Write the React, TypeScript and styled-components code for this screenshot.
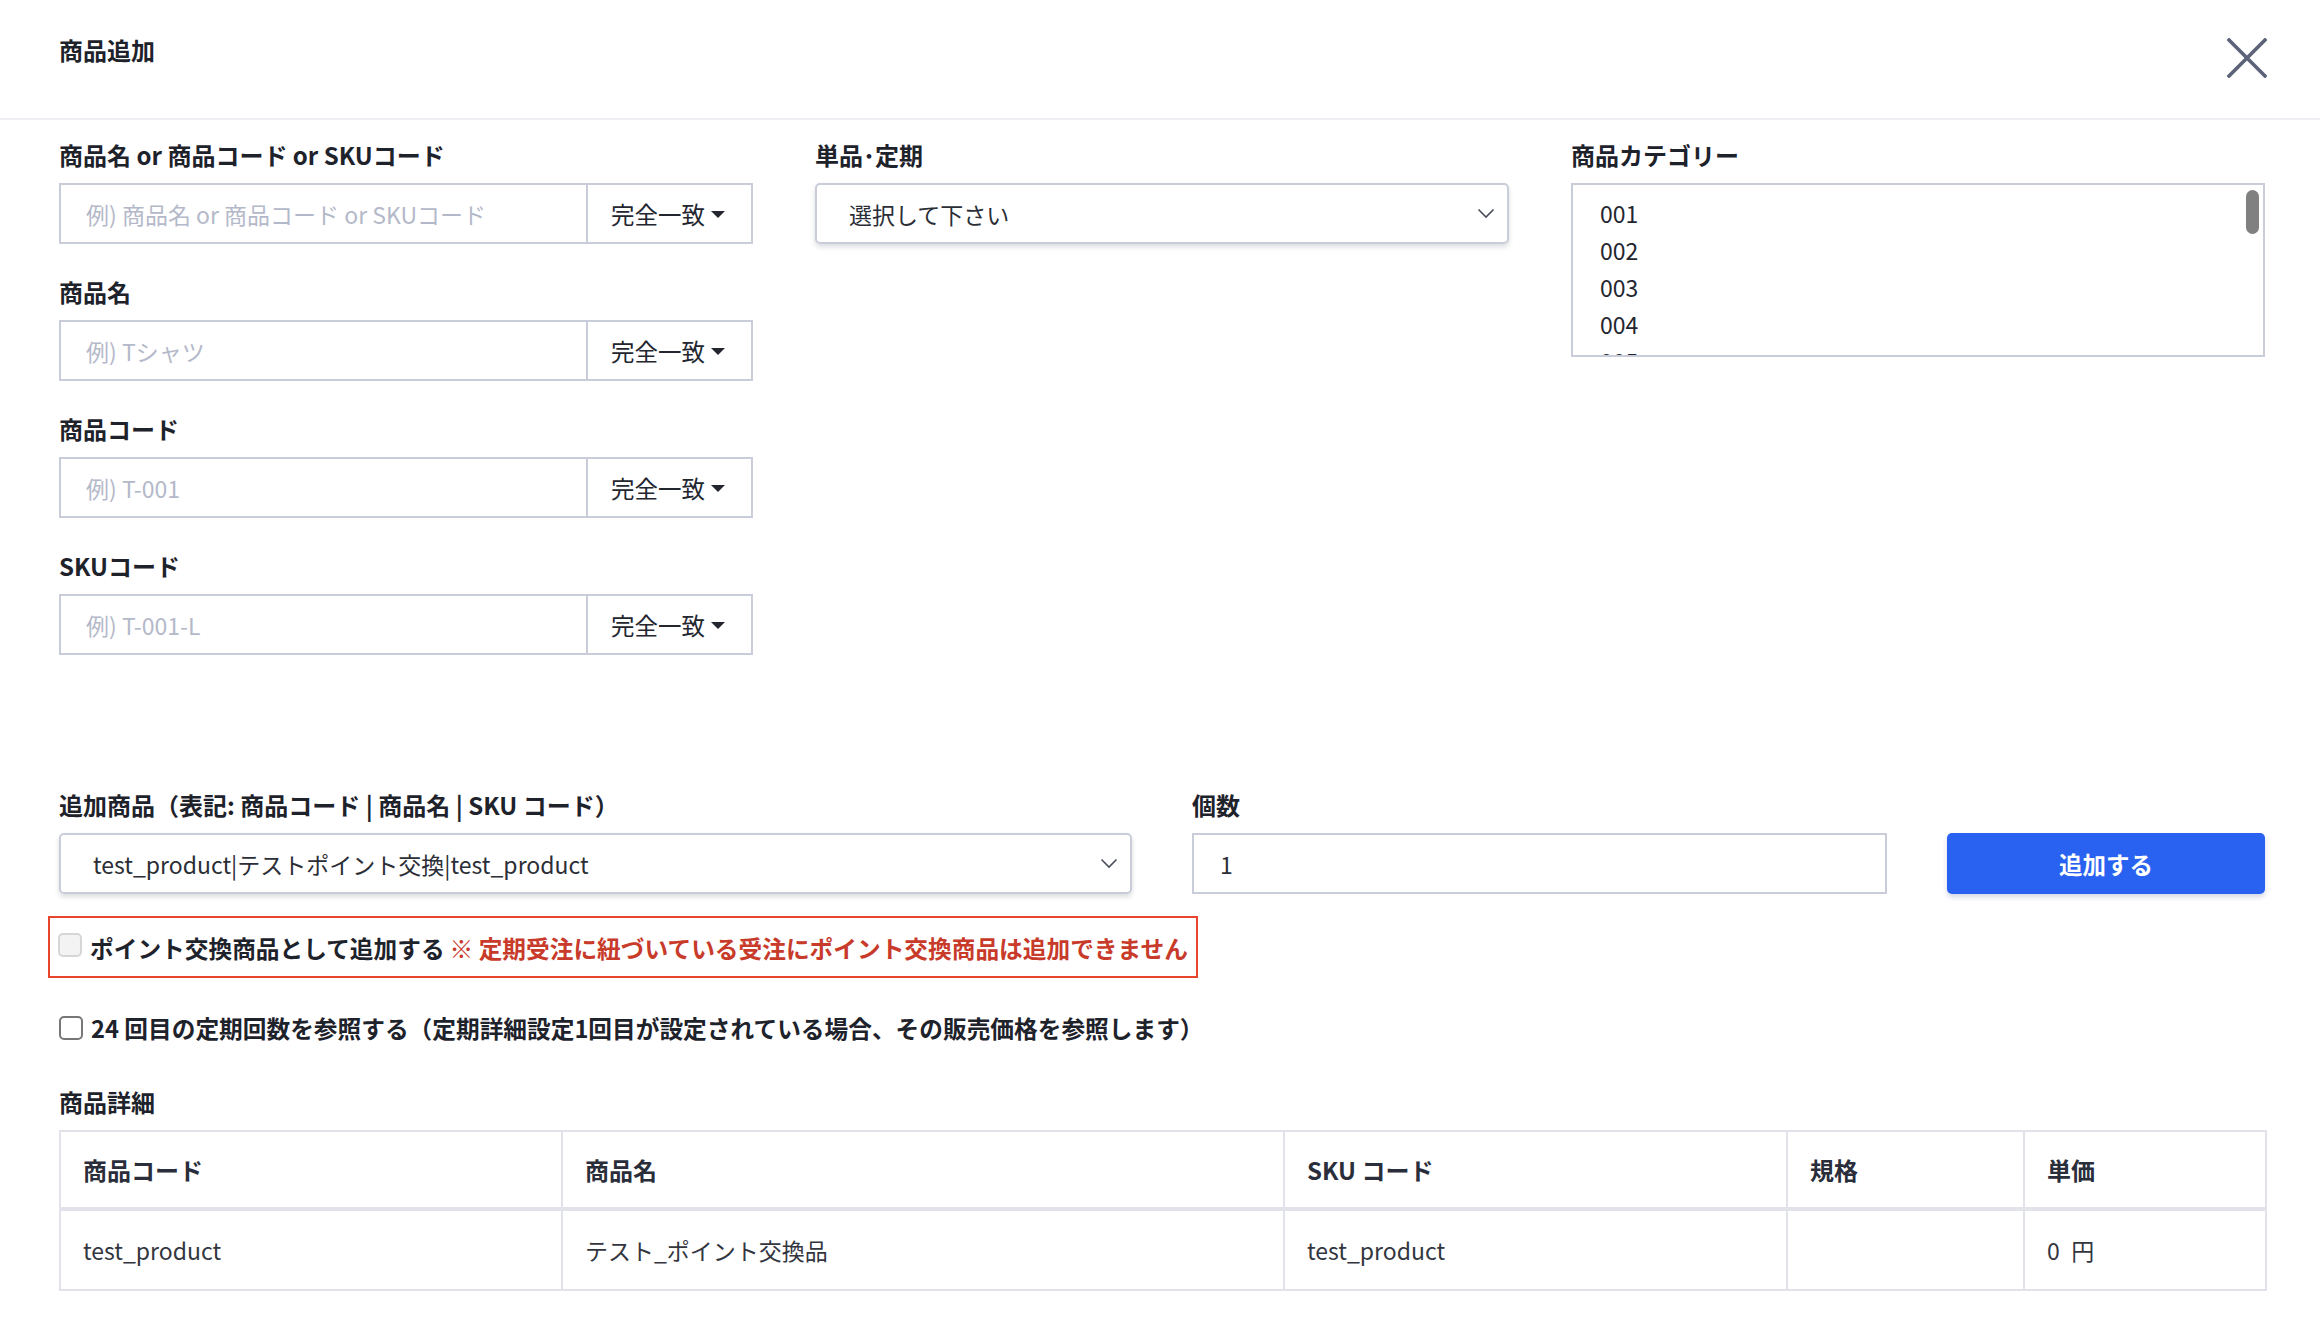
import React from 'react';
import styled, { createGlobalStyle } from 'styled-components';

const GlobalStyle = createGlobalStyle`
  body {
    margin: 0;
    background: #fff;
    font-family: "Noto Sans CJK JP", "Noto Sans", sans-serif;
    color: #23262f;
  }
  * { box-sizing: border-box; }
`;

const Header = styled.header`
  display: flex;
  justify-content: space-between;
  align-items: flex-start;
  height: 120px;
  padding: 33px 53px 0 59px;
  border-bottom: 2px solid #eef0f4;
`;

const Title = styled.h1`
  margin: 0;
  font-size: 24px;
  line-height: 34px;
  font-weight: 700;
  color: #1e222b;
`;

const CloseButton = styled.button`
  width: 40px;
  height: 40px;
  margin-top: 5px;
  padding: 0;
  border: none;
  background: none;
  display: flex;
`;

const Body = styled.main`
  padding: 18px 55px 40px 59px;
`;

const SearchGrid = styled.div`
  display: grid;
  grid-template-columns: repeat(3, 1fr);
  column-gap: 62px;
  align-items: start;
`;

const Column = styled.div`
  display: flex;
  flex-direction: column;
  gap: 31px;
`;

const Field = styled.div`
  display: flex;
  flex-direction: column;
`;

const Label = styled.label`
  font-size: 24px;
  line-height: 34px;
  font-weight: 700;
  color: #1e222b;
  margin-bottom: 11px;
  white-space: nowrap;
`;

const InputGroup = styled.div`
  display: flex;
  height: 61px;
  border: 2px solid #c9cdd9;
`;

const TextInput = styled.input`
  flex: 1;
  min-width: 0;
  border: none;
  outline: none;
  padding: 0 0 0 25px;
  font-family: inherit;
  font-size: 23px;
  color: #2b2e36;
  &::placeholder { color: #b4b9c9; }
`;

const MatchAddon = styled.div`
  width: 165px;
  border-left: 2px solid #c9cdd9;
  display: flex;
  align-items: center;
  padding-left: 23px;
  font-size: 23.5px;
  color: #23262f;
  &::after {
    content: '';
    margin-left: 6px;
    margin-top: 2px;
    border-left: 7px solid transparent;
    border-right: 7px solid transparent;
    border-top: 7px solid #23262f;
  }
`;

const SelectBox = styled.div`
  height: 61px;
  border: 2px solid #c9cdd9;
  border-radius: 5px;
  box-shadow: 0 3px 5px rgba(40, 44, 60, 0.16);
  display: flex;
  align-items: center;
  justify-content: space-between;
  padding: 0 12px 0 32px;
  font-size: 23px;
  color: #2b2e36;
  white-space: nowrap;
`;

const ListBox = styled.div`
  position: relative;
  height: 174px;
  border: 2px solid #c9cdd9;
  overflow: hidden;
  padding: 10px 0 0 27px;
`;

const ListItem = styled.div`
  font-size: 23px;
  line-height: 37px;
  color: #23262f;
`;

const ScrollThumb = styled.div`
  position: absolute;
  top: 5px;
  right: 4px;
  width: 13px;
  height: 44px;
  border-radius: 7px;
  background: #808080;
`;

const AddRow = styled.div`
  display: grid;
  grid-template-columns: 1073px 695px 1fr;
  column-gap: 60px;
  align-items: end;
  margin-top: 133px;
`;

const QtyInput = styled.input`
  height: 61px;
  border: 2px solid #c9cdd9;
  padding: 0 0 0 26px;
  font-family: inherit;
  font-size: 23px;
  color: #2b2e36;
  outline: none;
`;

const PrimaryButton = styled.button`
  height: 61px;
  border: none;
  border-radius: 5px;
  background: #2962f0;
  box-shadow: 0 3px 5px rgba(40, 60, 120, 0.2);
  color: #fff;
  font-family: inherit;
  font-size: 23.5px;
  font-weight: 700;
`;

const WarnBox = styled.div`
  display: inline-flex;
  align-items: flex-start;
  height: 62px;
  margin: 22px 0 0 -11px;
  padding: 0 8px 0 8px;
  border: 2px solid #e8452e;
`;

const CheckRow = styled.div<{ $disabled?: boolean }>`
  display: flex;
  align-items: ${p => (p.$disabled ? 'flex-start' : 'center')};
  gap: 8px;
  margin-top: ${p => (p.$disabled ? '0' : '32px')};
  padding-top: ${p => (p.$disabled ? '12px' : '0')};
  font-size: 23.7px;
  line-height: 34px;
  font-weight: 700;
  color: #1e222b;
  white-space: nowrap;
`;

const CheckBox = styled.span<{ $disabled?: boolean }>`
  width: 24px;
  height: 24px;
  flex: none;
  border-radius: 5px;
  border: 2px solid ${p => (p.$disabled ? '#d6d6d6' : '#777')};
  background: ${p => (p.$disabled ? '#f3f3f3' : '#fff')};
  margin-top: ${p => (p.$disabled ? '3px' : '0')};
`;

const CheckText = styled.span`
  margin-top: 1px;
`;

const Warning = styled.span`
  color: #c83a2a;
  margin-left: 5px;
`;

const DetailLabel = styled(Label)`
  display: block;
  margin-top: 40px;
`;

const Table = styled.table`
  width: 100%;
  border-collapse: collapse;
  table-layout: fixed;
  font-size: 23px;
`;

const Th = styled.th`
  height: 78px;
  padding: 0 22px;
  text-align: left;
  font-size: 24px;
  font-weight: 700;
  color: #2a2d3a;
  border: 2px solid #e2e3ea;
  border-bottom-width: 4px;
`;

const Td = styled.td`
  height: 81px;
  padding: 0 22px;
  color: #33363f;
  border: 2px solid #e2e3ea;
`;

const Chevron = () => (
  <svg width="18" height="11" viewBox="0 0 18 11">
    <path d="M1.5 1.5 L9 9 L16.5 1.5" fill="none" stroke="#4a4e5a" strokeWidth="1.6" />
  </svg>
);

const searchFields = [
  { label: '商品名 or 商品コード or SKUコード', placeholder: '例) 商品名 or 商品コード or SKUコード' },
  { label: '商品名', placeholder: '例) Tシャツ' },
  { label: '商品コード', placeholder: '例) T-001' },
  { label: 'SKUコード', placeholder: '例) T-001-L' },
];

const categories = ['001', '002', '003', '004', '005', '006'];

const columns = [
  { title: '商品コード', width: 502 },
  { title: '商品名', width: 722 },
  { title: 'SKU コード', width: 503 },
  { title: '規格', width: 237 },
  { title: '単価', width: 242 },
];

const rows = [['test_product', 'テスト_ポイント交換品', 'test_product', '', '0\u2002円']];

export default function App() {
  return (
    <>
      <GlobalStyle />
      <Header>
        <Title>商品追加</Title>
        <CloseButton aria-label="close">
          <svg width="40" height="40" viewBox="0 0 40 40">
            <path d="M2 2 L38 38 M38 2 L2 38" stroke="#5c6379" strokeWidth="3.6" strokeLinecap="square" />
          </svg>
        </CloseButton>
      </Header>
      <Body>
        <SearchGrid>
          <Column>
            {searchFields.map(f => (
              <Field key={f.label}>
                <Label>{f.label}</Label>
                <InputGroup>
                  <TextInput placeholder={f.placeholder} />
                  <MatchAddon>完全一致</MatchAddon>
                </InputGroup>
              </Field>
            ))}
          </Column>
          <Field>
            <Label>単品･定期</Label>
            <SelectBox>
              <span>選択して下さい</span>
              <Chevron />
            </SelectBox>
          </Field>
          <Field>
            <Label>商品カテゴリー</Label>
            <ListBox>
              {categories.map(c => (
                <ListItem key={c}>{c}</ListItem>
              ))}
              <ScrollThumb />
            </ListBox>
          </Field>
        </SearchGrid>

        <AddRow>
          <Field>
            <Label>追加商品（表記: 商品コード | 商品名 | SKU コード）</Label>
            <SelectBox>
              <span>test_product|テストポイント交換|test_product</span>
              <Chevron />
            </SelectBox>
          </Field>
          <Field>
            <Label>個数</Label>
            <QtyInput defaultValue="1" />
          </Field>
          <PrimaryButton>追加する</PrimaryButton>
        </AddRow>

        <WarnBox>
          <CheckRow $disabled>
            <CheckBox $disabled />
            <CheckText>
              ポイント交換商品として追加する
              <Warning>※ 定期受注に紐づいている受注にポイント交換商品は追加できません</Warning>
            </CheckText>
          </CheckRow>
        </WarnBox>

        <CheckRow>
          <CheckBox />
          <CheckText>24 回目の定期回数を参照する（定期詳細設定1回目が設定されている場合、その販売価格を参照します）</CheckText>
        </CheckRow>

        <DetailLabel>商品詳細</DetailLabel>
        <Table>
          <colgroup>
            {columns.map(c => (
              <col key={c.title} style={{ width: c.width }} />
            ))}
          </colgroup>
          <thead>
            <tr>
              {columns.map(c => (
                <Th key={c.title}>{c.title}</Th>
              ))}
            </tr>
          </thead>
          <tbody>
            {rows.map((r, i) => (
              <tr key={i}>
                {r.map((cell, j) => (
                  <Td key={j}>{cell}</Td>
                ))}
              </tr>
            ))}
          </tbody>
        </Table>
      </Body>
    </>
  );
}
